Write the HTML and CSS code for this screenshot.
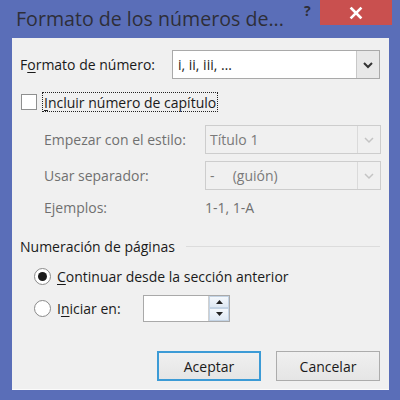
FILE: index.html
```html
<!DOCTYPE html>
<html lang="es">
<head>
<meta charset="utf-8">
<link rel="stylesheet" href="styles.css">
</head>
<body>
<div class="window">
  <div class="titlebar">
    <span class="title">Formato de los números de...</span>
    <span class="help">?</span>
    <span class="close"><svg width="14" height="14" viewBox="0 0 14 14"><path d="M2.5 2.5 L11.5 11.5 M11.5 2.5 L2.5 11.5" stroke="#fff" stroke-width="2.6" stroke-linecap="square"/></svg></span>
  </div>
  <div class="client">
    <div class="format-row">
      <span class="lbl">F<u>o</u>rmato de número:</span>
      <div class="select wide">
        <span class="val">i, ii, iii, …</span>
        <span class="arrow"><svg width="10" height="8" viewBox="0 0 10 8"><path d="M1 2 L5 6 L9 2" fill="none" stroke="#333" stroke-width="2"/></svg></span>
      </div>
    </div>
    <div class="check-row">
      <span class="checkbox"></span>
      <span class="focus"><u>I</u>ncluir número de capítulo</span>
    </div>
    <div class="chapter">
      <span class="lbl dis">Empezar con el estilo:</span>
      <div class="select dis-select">
        <span class="val">Título 1</span>
        <span class="arrow"><svg width="10" height="8" viewBox="0 0 10 8"><path d="M1 2 L5 6 L9 2" fill="none" stroke="#c4c4c4" stroke-width="1.5"/></svg></span>
      </div>
      <span class="lbl dis">Usar separador:</span>
      <div class="select dis-select">
        <span class="val">-&nbsp;&nbsp;&nbsp;&nbsp;&nbsp;(guión)</span>
        <span class="arrow"><svg width="10" height="8" viewBox="0 0 10 8"><path d="M1 2 L5 6 L9 2" fill="none" stroke="#c4c4c4" stroke-width="1.5"/></svg></span>
      </div>
      <span class="lbl dis">Ejemplos:</span>
      <span class="lbl dis">1-1, 1-A</span>
    </div>
    <div class="group-head">
      <span>Numeración de páginas</span>
      <span class="line"></span>
    </div>
    <div class="radio-row first">
      <span class="radio on"><span class="dot"></span></span>
      <span class="lbl"><u>C</u>ontinuar desde la sección anterior</span>
    </div>
    <div class="radio-row second">
      <span class="radio"></span>
      <span class="lbl start">I<u>n</u>iciar en:</span>
      <div class="spin">
        <span class="spin-input"></span>
        <span class="spin-btns">
          <span class="sb"><svg width="7" height="4" viewBox="0 0 7 4"><path d="M0 4 L3.5 0 L7 4 Z" fill="#222"/></svg></span>
          <span class="sb"><svg width="7" height="4" viewBox="0 0 7 4"><path d="M0 0 L3.5 4 L7 0 Z" fill="#222"/></svg></span>
        </span>
      </div>
    </div>
    <div class="buttons">
      <span class="btn default">Aceptar</span>
      <span class="btn">Cancelar</span>
    </div>
  </div>
</div>
</body>
</html>
```
FILE: styles.css
```css
* { box-sizing: border-box; }
html, body { margin: 0; padding: 0; }
body { width: 400px; height: 400px; overflow: hidden; font-family: "Open Sans", "Noto Sans", sans-serif; }
u { text-decoration: underline; text-underline-offset: 2px; }

.window {
  width: 400px; height: 400px;
  background: #5a6eb8;
  display: flex; flex-direction: column;
  padding: 0 11px 10px 12px;
}
.titlebar {
  height: 38px;
  display: flex; align-items: flex-start;
  margin-right: -3px;
}
.title {
  font-size: 19.6px; color: #2e2e38;
  margin: 5px 0 0 4px;
  white-space: nowrap; flex-shrink: 0;
}
.help {
  font-size: 14px; font-weight: bold; color: #2e2e38;
  margin: 1px 0 0 20px;
  flex-shrink: 0;
}
.close {
  margin-left: auto;
  width: 72px; height: 25px; flex-shrink: 0;
  background: #c9504f;
  display: flex; align-items: center; justify-content: center;
}

.client {
  flex: 1;
  background: #f0f0f0;
  border-bottom: 1px solid #fbfbfb;
  font-size: 14px; color: #1a1a1a;
  padding: 12px 9px 0 8px;
  display: flex; flex-direction: column;
}
.lbl { white-space: nowrap; }
.format-row { display: flex; align-items: center; height: 29px; }
.format-row .lbl { width: 152px; }
.select {
  display: flex; align-items: stretch;
  height: 29px;
  background: #fff;
  border: 1px solid #a9a9a9;
}
.select.wide { width: 208px; }
.select .val { flex: 1; padding-left: 5px; display: flex; align-items: center; color: #1a1a1a; }
.select .arrow {
  width: 23px; display: flex; align-items: center; justify-content: center;
  background: #e8e8e8; border-left: 1px solid #c8c8c8;
}
.dis-select { background: #f0f0f0; border-color: #cdcdcd; }
.dis-select .val { color: #7a7a7a; padding-left: 4px; }
.dis-select .arrow { background: #f0f0f0; border-left-color: #dadada; }

.check-row { display: flex; align-items: center; margin-top: 13px; height: 20px; }
.checkbox {
  width: 16px; height: 16px; margin-left: 1px;
  border: 1px solid #8e8f8f; background: #fff;
}
.focus {
  margin-left: 5px; padding: 0 1px;
  border: 1px dotted #222;
  height: 20px; display: flex; align-items: center;
}

.chapter {
  display: grid;
  grid-template-columns: 161px 176px;
  grid-template-rows: 29px 29px 20px;
  row-gap: 7px;
  align-items: center;
  margin: 13px 0 0 24px;
}
.dis { color: #707070; }

.group-head { display: flex; align-items: center; margin-top: 17px; height: 24px; }
.group-head .line { flex: 1; height: 1px; background: #dcdcdc; margin: 0 0 0 11px; }

.radio-row { display: flex; align-items: center; }
.radio-row.first { margin: 3px 0 0 14px; height: 30px; }
.radio-row.second { margin: 3px 0 0 14px; height: 28px; }
.radio {
  width: 17px; height: 17px; border-radius: 50%;
  border: 1px solid #8a8a8a; background: #fff;
  display: flex; align-items: center; justify-content: center;
  margin-right: 6px;
}
.radio .dot { width: 9px; height: 9px; border-radius: 50%; background: #1b1b1b; }
.start { width: 86px; }
.spin { display: flex; height: 27px; width: 87px; border: 1px solid #a9a9a9; background: #fff; }
.spin-input { flex: 1; }
.spin-btns { width: 21px; display: flex; flex-direction: column; border-left: 1px solid #d0d0d0; }
.sb {
  flex: 1; display: flex; align-items: center; justify-content: center;
  background: linear-gradient(#f4f8fc, #dfe9f3);
  border: 1px solid #c3d3e4;
}

.buttons { display: flex; justify-content: flex-end; gap: 15px; margin-top: 29px; }
.btn {
  width: 104px; height: 30px;
  display: flex; align-items: center; justify-content: center;
  border: 1px solid #acacac;
  background: linear-gradient(#f0f0f0, #e5e5e5);
  color: #1a1a1a;
}
.btn.default { border: 2px solid #3c9bd6; }
```
